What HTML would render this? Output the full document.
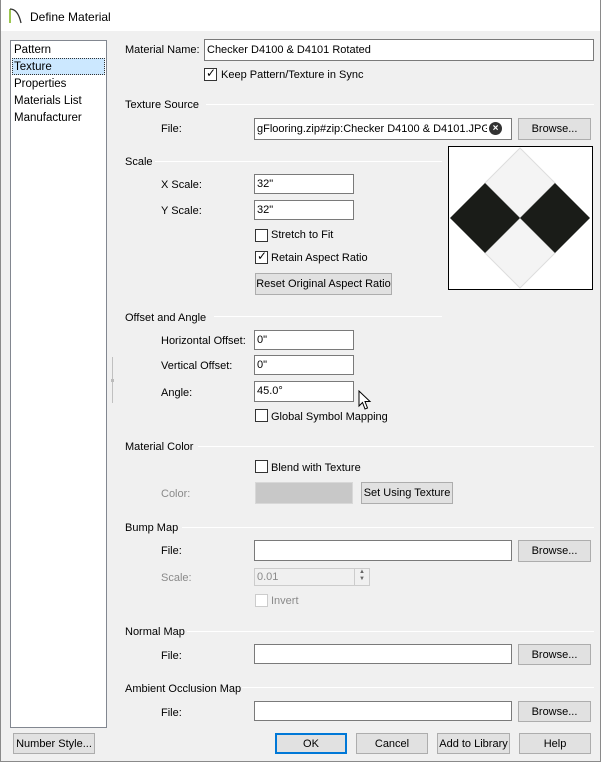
<!DOCTYPE html>
<html><head><meta charset="utf-8"><style>
*{box-sizing:border-box;margin:0;padding:0}
body{width:601px;height:762px;background:#f0f0f0;font-family:"Liberation Sans",sans-serif;font-size:11px;color:#000;position:relative;overflow:hidden}
.a{position:absolute;white-space:nowrap}
.title{left:0;top:0;width:601px;height:31px;background:#fff}
.win{left:0;top:0;width:601px;height:762px;border:1px solid #8a8a8a;border-top:none}
.inp{position:absolute;background:#fff;border:1px solid #7a7a7a;padding:4px 2px 0 2px;font-size:11px;white-space:nowrap;overflow:hidden}
.btn{position:absolute;background:#e1e1e1;border:1px solid #adadad;text-align:center;font-size:11px;white-space:nowrap;padding-top:4px}
.cb{position:absolute;width:13px;height:13px;border:1px solid #333;background:#fff}
.line{position:absolute;height:1px;background:#a0a0a0;border-bottom:1px solid #fff}
.g{color:#8a8a8a}
.ck{position:absolute;font-size:12px}
</style></head><body>
<div class="a title"></div>
<div class="a win"></div>
<svg class="a" style="left:8px;top:6px" width="16" height="18"><path d="M2 3 L2 17" stroke="#7ab317" stroke-width="1.5"/><path d="M2 3 Q10 3 13 17" stroke="#333" stroke-width="1.3" fill="none"/></svg>
<div class="a" style="left:30px;top:10px;font-size:12px">Define Material</div>

<div class="a" style="left:10px;top:40px;width:97px;height:688px;background:#fff;border:1px solid #828790"></div>
<div class="a" style="left:12px;top:58px;width:93px;height:17px;background:#cce8ff;border:1px dotted #333"></div>
<div class="a" style="left:14px;top:44px;font-size:11.5px">Pattern</div>
<div class="a" style="left:14px;top:61px;font-size:11.5px">Texture</div>
<div class="a" style="left:14px;top:78px;font-size:11.5px">Properties</div>
<div class="a" style="left:14px;top:95px;font-size:11.5px">Materials List</div>
<div class="a" style="left:14px;top:112px;font-size:11.5px">Manufacturer</div>
<div class="a" style="left:112px;top:357px;width:1px;height:46px;background:#c0c0c0"></div>
<div class="a" style="left:111px;top:379px;width:3px;height:3px;background:#bbb"></div>

<div class="a" style="left:125px;top:44px">Material Name:</div>
<div class="inp" style="left:204px;top:39px;width:390px;height:22px">Checker D4100 &amp; D4101 Rotated</div>
<div class="cb" style="left:204px;top:68px"></div><div class="ck" style="left:206px;top:66px">✓</div>
<div class="a" style="left:221px;top:69px">Keep Pattern/Texture in Sync</div>

<div class="a" style="left:125px;top:99px">Texture Source</div><div class="line" style="left:206px;top:104px;width:388px"></div>
<div class="a" style="left:161px;top:123px">File:</div>
<div class="inp" style="left:254px;top:118px;width:258px;height:22px"><span style="display:inline-block;width:230px;overflow:hidden">gFlooring.zip#zip:Checker D4100 &amp; D4101.JPG</span></div>
<div class="a" style="left:489px;top:122px;width:13px;height:13px;border-radius:50%;background:#333;color:#fff;font-size:10px;line-height:13px;text-align:center;font-weight:bold">×</div>
<div class="btn" style="left:518px;top:118px;width:73px;height:22px">Browse...</div>

<div class="a" style="left:125px;top:156px">Scale</div><div class="line" style="left:155px;top:161px;width:287px"></div>
<div class="a" style="left:161px;top:179px">X Scale:</div><div class="inp" style="left:254px;top:174px;width:100px;height:20px;padding-top:3px">32"</div>
<div class="a" style="left:161px;top:205px">Y Scale:</div><div class="inp" style="left:254px;top:200px;width:100px;height:20px;padding-top:3px">32"</div>
<div class="cb" style="left:255px;top:229px"></div><div class="a" style="left:271px;top:229px">Stretch to Fit</div>
<div class="cb" style="left:255px;top:251px"></div><div class="ck" style="left:257px;top:249px">✓</div><div class="a" style="left:271px;top:252px">Retain Aspect Ratio</div>
<div class="btn" style="left:255px;top:273px;width:137px;height:22px">Reset Original Aspect Ratio</div>

<svg class="a" style="left:448px;top:146px" width="145" height="144"><rect x="0.5" y="0.5" width="144" height="143" fill="#fff" stroke="#000"/><polygon points="72,2 107,37 72,72 37,37" fill="#f4f4f4" stroke="#ddd"/><polygon points="72,72 107,107 72,142 37,107" fill="#f4f4f4" stroke="#ddd"/><polygon points="2,72 37,37 72,72 37,107" fill="#1a1c18"/><polygon points="72,72 107,37 142,72 107,107" fill="#1a1c18"/></svg>

<div class="a" style="left:125px;top:312px">Offset and Angle</div><div class="line" style="left:214px;top:316px;width:228px"></div>
<div class="a" style="left:161px;top:335px">Horizontal Offset:</div><div class="inp" style="left:254px;top:330px;width:100px;height:20px;padding-top:3px">0"</div>
<div class="a" style="left:161px;top:360px">Vertical Offset:</div><div class="inp" style="left:254px;top:355px;width:100px;height:20px;padding-top:3px">0"</div>
<div class="a" style="left:161px;top:387px">Angle:</div><div class="inp" style="left:254px;top:381px;width:100px;height:21px;padding-top:3px">45.0°</div>
<svg class="a" style="left:358px;top:390px" width="14" height="22"><path d="M1 1 L1 16 L4.5 12.5 L7 19 L9.5 18 L7 11.5 L12 11.5 Z" fill="#fff" stroke="#000"/></svg>
<div class="cb" style="left:255px;top:409px"></div><div class="a" style="left:271px;top:411px">Global Symbol Mapping</div>

<div class="a" style="left:125px;top:441px">Material Color</div><div class="line" style="left:198px;top:446px;width:396px"></div>
<div class="cb" style="left:255px;top:460px"></div><div class="a" style="left:271px;top:462px">Blend with Texture</div>
<div class="a g" style="left:161px;top:488px">Color:</div>
<div class="a" style="left:255px;top:482px;width:98px;height:22px;background:#c8c8c8;border:1px solid #d8d8d8"></div>
<div class="btn" style="left:361px;top:482px;width:92px;height:22px">Set Using Texture</div>

<div class="a" style="left:125px;top:522px">Bump Map</div><div class="line" style="left:182px;top:527px;width:412px"></div>
<div class="a" style="left:161px;top:545px">File:</div><div class="inp" style="left:254px;top:540px;width:258px;height:21px"></div>
<div class="btn" style="left:518px;top:540px;width:73px;height:22px">Browse...</div>
<div class="a g" style="left:161px;top:572px">Scale:</div>
<div class="inp g" style="left:254px;top:568px;width:116px;height:18px;background:#f0f0f0;border-color:#ccc;padding-top:2px">0.01</div>
<div class="a" style="left:354px;top:569px;width:15px;height:16px;border-left:1px solid #ccc;font-size:6px;color:#666;line-height:7px;text-align:center">▲<br>▼</div>
<div class="cb" style="left:255px;top:594px;border-color:#ccc"></div><div class="a g" style="left:271px;top:595px">Invert</div>

<div class="a" style="left:125px;top:626px">Normal Map</div><div class="line" style="left:187px;top:631px;width:407px"></div>
<div class="a" style="left:161px;top:650px">File:</div><div class="inp" style="left:254px;top:644px;width:258px;height:20px"></div>
<div class="btn" style="left:518px;top:644px;width:73px;height:21px">Browse...</div>

<div class="a" style="left:125px;top:683px">Ambient Occlusion Map</div><div class="line" style="left:242px;top:687px;width:352px"></div>
<div class="a" style="left:161px;top:707px">File:</div><div class="inp" style="left:254px;top:701px;width:258px;height:20px"></div>
<div class="btn" style="left:518px;top:701px;width:73px;height:21px">Browse...</div>

<div class="btn" style="left:13px;top:733px;width:82px;height:21px">Number Style...</div>
<div class="btn" style="left:275px;top:733px;width:72px;height:21px;border:2px solid #0078d7;padding-top:3px">OK</div>
<div class="btn" style="left:356px;top:733px;width:72px;height:21px">Cancel</div>
<div class="btn" style="left:437px;top:733px;width:73px;height:21px">Add to Library</div>
<div class="btn" style="left:519px;top:733px;width:72px;height:21px">Help</div>
</body></html>
